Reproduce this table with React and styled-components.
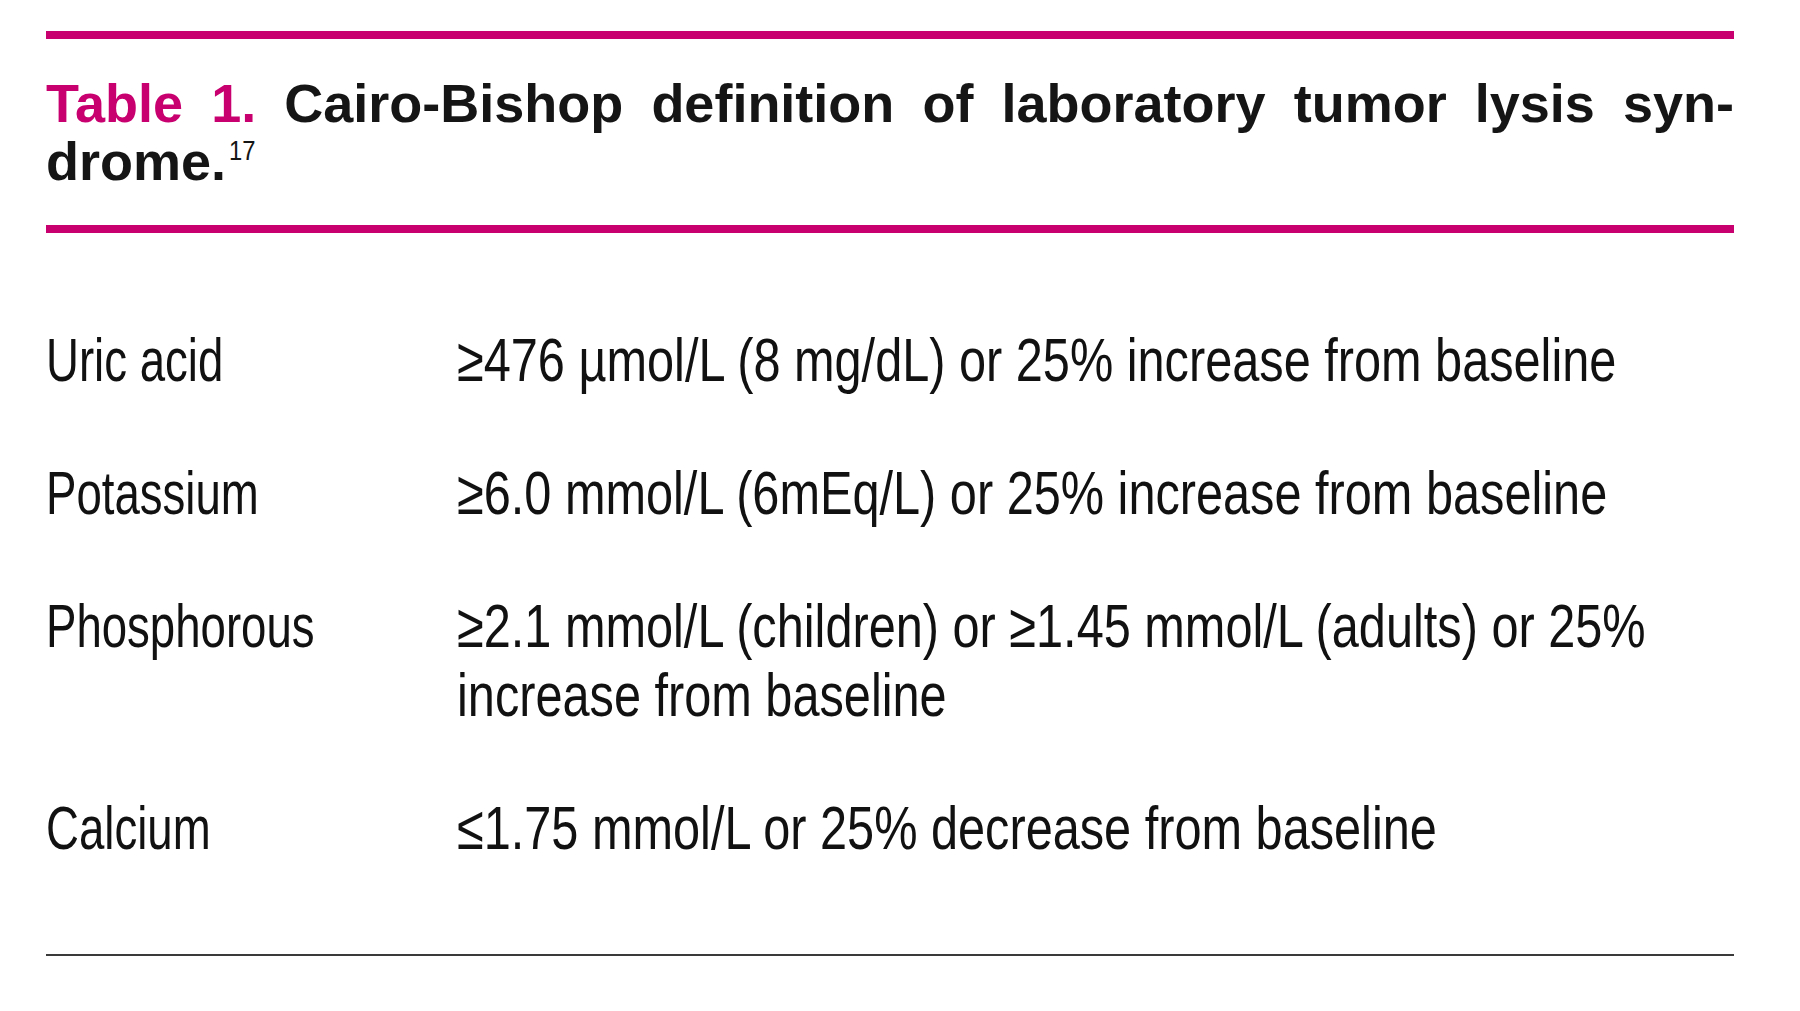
import React from "react";
import styled, { createGlobalStyle } from "styled-components";

const GlobalStyle = createGlobalStyle`
  html, body {
    margin: 0;
    padding: 0;
    background: #ffffff;
    overflow: hidden;
  }
  body {
    font-family: "Liberation Sans", Arial, sans-serif;
    color: #111111;
  }
`;

const MAGENTA = "#c8006f";

const Page = styled.div`
  width: 1688px;
  padding: 31px 0 0 46px;
  display: flex;
  flex-direction: column;
`;

const Rule = styled.div`
  height: ${(p) => p.$thick}px;
  background: ${(p) => p.$color};
`;

const Caption = styled.div`
  font-family: "Liberation Sans", Arial, sans-serif;
  font-weight: 700;
  font-size: 54px;
  line-height: 58px;
  color: #151515;
  padding: 35px 0 35px;
`;

const CaptionLine = styled.div`
  text-align: justify;
  text-align-last: justify;
`;

const Label = styled.span`
  color: ${MAGENTA};
`;

const Ref = styled.sup`
  display: inline-block;
  font-weight: 400;
  font-size: 28px;
  line-height: 28px;
  vertical-align: 20px;
  margin-left: 3px;
  transform: scaleX(0.85);
  transform-origin: 0 0;
`;

const Rows = styled.div`
  display: flex;
  flex-direction: column;
  gap: 64px;
  padding: 92px 0 92px;
`;

const Row = styled.div`
  display: grid;
  grid-template-columns: 411px 1fr;
  font-family: "Liberation Sans", Arial, sans-serif;
  font-size: 62px;
  line-height: 69px;
  color: #111111;
`;

/* condensed face: the installed sans, narrowed horizontally */
const Squeeze = styled.div`
  width: ${(p) => 100 / p.$ratio}%;
  transform: scaleX(${(p) => p.$ratio});
  transform-origin: 0 0;
`;

const Term = styled.div``;
const Def = styled.div``;

const rows = [
  ["Uric acid", "\u2265476 \u00b5mol/L (8 mg/dL) or 25% increase from baseline"],
  ["Potassium", "\u22656.0 mmol/L (6mEq/L) or 25% increase from baseline"],
  [
    "Phosphorous",
    "\u22652.1 mmol/L (children) or \u22651.45 mmol/L (adults) or 25% increase from baseline",
  ],
  ["Calcium", "\u22641.75 mmol/L or 25% decrease from baseline"],
];

export default function App() {
  return (
    <>
      <GlobalStyle />
      <Page>
        <Rule $thick={8} $color={MAGENTA} />
        <Caption>
          <CaptionLine>
            <Label>Table 1.</Label> Cairo-Bishop definition of laboratory tumor lysis syn-
          </CaptionLine>
          <div>
            drome.<Ref>17</Ref>
          </div>
        </Caption>
        <Rule $thick={8} $color={MAGENTA} />
        <Rows>
          {rows.map(([t, d]) => (
            <Row key={t}>
              <Term>
                <Squeeze $ratio={0.735}>{t}</Squeeze>
              </Term>
              <Def>
                <Squeeze $ratio={0.785}>{d}</Squeeze>
              </Def>
            </Row>
          ))}
        </Rows>
        <Rule $thick={2} $color="#3a3a3a" />
      </Page>
    </>
  );
}
